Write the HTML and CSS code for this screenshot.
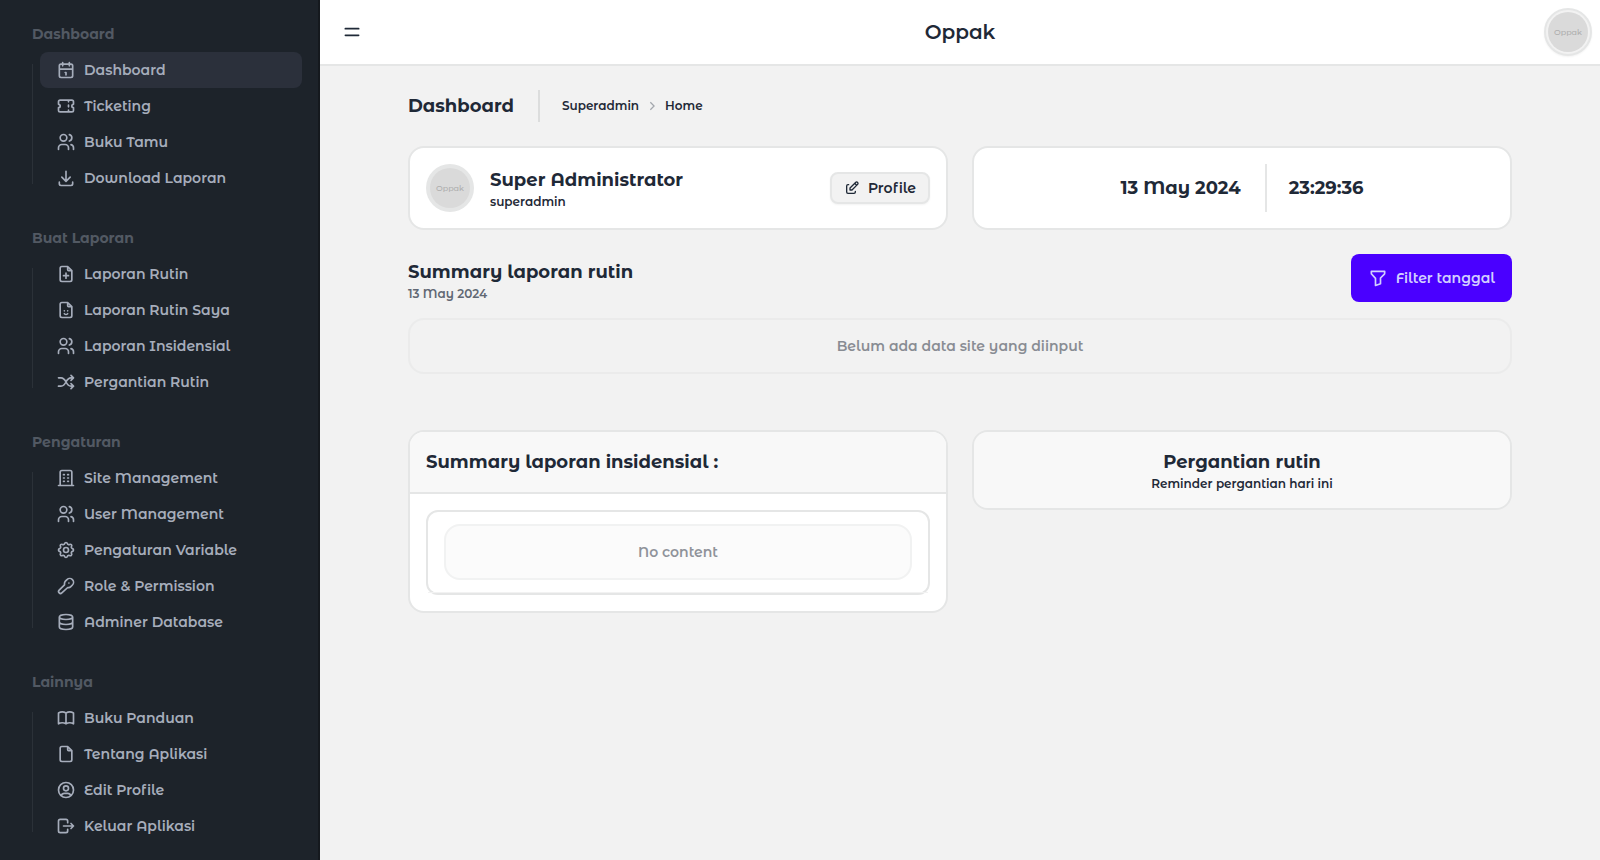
FILE: index.html
```html
<!DOCTYPE html>
<html lang="id">
<head>
<meta charset="utf-8">
<meta name="viewport" content="width=device-width, initial-scale=1">
<title>Oppak - Dashboard</title>
<link rel="stylesheet" href="styles.css">
</head>
<body>
<svg class="sprite" aria-hidden="true">
  <symbol id="i-calendar" viewBox="0 0 24 24"><path d="M4 7a2 2 0 0 1 2-2h12a2 2 0 0 1 2 2v12a2 2 0 0 1-2 2H6a2 2 0 0 1-2-2zM16 3v4M8 3v4M4 11h16M11 15h1M12 15v3"/></symbol>
  <symbol id="i-ticket" viewBox="0 0 24 24"><path d="M15 5v2M15 11v2M15 17v2M5 5h14a2 2 0 0 1 2 2v3a2 2 0 0 0 0 4v3a2 2 0 0 1-2 2H5a2 2 0 0 1-2-2v-3a2 2 0 0 0 0-4V7a2 2 0 0 1 2-2"/></symbol>
  <symbol id="i-users" viewBox="0 0 24 24"><path d="M5 7a4 4 0 1 0 8 0a4 4 0 1 0-8 0M3 21v-2a4 4 0 0 1 4-4h4a4 4 0 0 1 4 4v2M16 3.130a4 4 0 0 1 0 7.750M21 21v-2a4 4 0 0 0-3-3.850"/></symbol>
  <symbol id="i-download" viewBox="0 0 24 24"><path d="M4 17v2a2 2 0 0 0 2 2h12a2 2 0 0 0 2-2v-2M7 11l5 5l5-5M12 4v12"/></symbol>
  <symbol id="i-file" viewBox="0 0 24 24"><path d="M14 3v4a1 1 0 0 0 1 1h4M17 21H7a2 2 0 0 1-2-2V5a2 2 0 0 1 2-2h7l5 5v11a2 2 0 0 1-2 2z"/></symbol>
  <symbol id="i-file-plus" viewBox="0 0 24 24"><path d="M14 3v4a1 1 0 0 0 1 1h4M17 21H7a2 2 0 0 1-2-2V5a2 2 0 0 1 2-2h7l5 5v11a2 2 0 0 1-2 2zM12 11v6M9 14h6"/></symbol>
  <symbol id="i-file-smile" viewBox="0 0 24 24"><path d="M14 3v4a1 1 0 0 0 1 1h4M17 21H7a2 2 0 0 1-2-2V5a2 2 0 0 1 2-2h7l5 5v11a2 2 0 0 1-2 2zM10 13v.01M14 13v.01M10 16.500a3 3 0 0 0 4 0"/></symbol>
  <symbol id="i-shuffle" viewBox="0 0 24 24"><path d="M18 4l3 3l-3 3M18 20l3-3l-3-3M3 7h3c3 0 4.500 2 6 5s3 5 6 5h3M21 7h-3c-3 0-4.500 2-6 5s-3 5-6 5H3"/></symbol>
  <symbol id="i-building" viewBox="0 0 24 24"><path d="M3 21h18M9 8h1M9 12h1M9 16h1M14 8h1M14 12h1M14 16h1M5 21V5a2 2 0 0 1 2-2h10a2 2 0 0 1 2 2v16"/></symbol>
  <symbol id="i-settings" viewBox="0 0 24 24"><path d="M10.325 4.317c.426-1.756 2.924-1.756 3.350 0a1.724 1.724 0 0 0 2.573 1.066c1.543-.94 3.310.826 2.370 2.370a1.724 1.724 0 0 0 1.065 2.572c1.756.426 1.756 2.924 0 3.350a1.724 1.724 0 0 0-1.066 2.573c.94 1.543-.826 3.310-2.370 2.370a1.724 1.724 0 0 0-2.572 1.065c-.426 1.756-2.924 1.756-3.350 0a1.724 1.724 0 0 0-2.573-1.066c-1.543.94-3.310-.826-2.370-2.370a1.724 1.724 0 0 0-1.065-2.572c-1.756-.426-1.756-2.924 0-3.350a1.724 1.724 0 0 0 1.066-2.573c-.94-1.543.826-3.310 2.370-2.370c1 .608 2.296.07 2.572-1.065zM9 12a3 3 0 1 0 6 0a3 3 0 0 0-6 0"/></symbol>
  <symbol id="i-key" viewBox="0 0 24 24"><path d="M10.200 8.600a4 4 0 0 1 1.100-2.400l1.900-1.900a4.200 4.200 0 0 1 6.500 6.500l-1.900 1.900a4 4 0 0 1-3.700 1.100L7 20.200a2.200 2.200 0 0 1-3.200-3.200L10.200 10.600zM15.500 8.500v.01"/></symbol>
  <symbol id="i-database" viewBox="0 0 24 24"><path d="M4 6a8 3 0 1 0 16 0a8 3 0 1 0-16 0M4 6v6a8 3 0 0 0 16 0V6M4 12v6a8 3 0 0 0 16 0v-6"/></symbol>
  <symbol id="i-book" viewBox="0 0 24 24"><path d="M3 19a9 9 0 0 1 9 0a9 9 0 0 1 9 0M3 6a9 9 0 0 1 9 0a9 9 0 0 1 9 0M3 6v13M12 6v13M21 6v13"/></symbol>
  <symbol id="i-user-circle" viewBox="0 0 24 24"><path d="M3 12a9 9 0 1 0 18 0a9 9 0 1 0-18 0M9 10a3 3 0 1 0 6 0a3 3 0 1 0-6 0M6.168 18.849A4 4 0 0 1 10 16h4a4 4 0 0 1 3.834 2.855"/></symbol>
  <symbol id="i-logout" viewBox="0 0 24 24"><path d="M14 8V6a2 2 0 0 0-2-2H5a2 2 0 0 0-2 2v12a2 2 0 0 0 2 2h7a2 2 0 0 0 2-2v-2M9 12h12l-3-3M18 15l3-3"/></symbol>
  <symbol id="i-menu" viewBox="0 0 24 24"><path d="M4 8h16M4 16h16"/></symbol>
  <symbol id="i-edit" viewBox="0 0 24 24"><path d="M7 7H6a2 2 0 0 0-2 2v9a2 2 0 0 0 2 2h9a2 2 0 0 0 2-2v-1M20.385 6.585a2.100 2.100 0 0 0-2.970-2.970L9 12v3h3zM16 5l3 3"/></symbol>
  <symbol id="i-filter" viewBox="0 0 24 24"><path d="M4 4h16v2.172a2 2 0 0 1-.586 1.414L15 12v7l-6 2v-8.500L4.520 7.572A2 2 0 0 1 4 6.227z"/></symbol>
  <symbol id="i-chevron" viewBox="0 0 24 24"><path d="M8 3l9 9l-9 9"/></symbol>
</svg>

<div class="layout">
  <aside class="sidebar">
    <nav class="menu" aria-label="Menu utama">
      <section class="menu-group">
        <h2 class="menu-title">Dashboard</h2>
        <ul class="menu-list">
          <li><a class="menu-link active" href="#" aria-current="page"><svg class="icon"><use href="#i-calendar"/></svg>Dashboard</a></li>
          <li><a class="menu-link" href="#"><svg class="icon"><use href="#i-ticket"/></svg>Ticketing</a></li>
          <li><a class="menu-link" href="#"><svg class="icon"><use href="#i-users"/></svg>Buku Tamu</a></li>
          <li><a class="menu-link" href="#"><svg class="icon"><use href="#i-download"/></svg>Download Laporan</a></li>
        </ul>
      </section>
      <section class="menu-group">
        <h2 class="menu-title">Buat Laporan</h2>
        <ul class="menu-list">
          <li><a class="menu-link" href="#"><svg class="icon"><use href="#i-file-plus"/></svg>Laporan Rutin</a></li>
          <li><a class="menu-link" href="#"><svg class="icon"><use href="#i-file-smile"/></svg>Laporan Rutin Saya</a></li>
          <li><a class="menu-link" href="#"><svg class="icon"><use href="#i-users"/></svg>Laporan Insidensial</a></li>
          <li><a class="menu-link" href="#"><svg class="icon"><use href="#i-shuffle"/></svg>Pergantian Rutin</a></li>
        </ul>
      </section>
      <section class="menu-group">
        <h2 class="menu-title">Pengaturan</h2>
        <ul class="menu-list">
          <li><a class="menu-link" href="#"><svg class="icon"><use href="#i-building"/></svg>Site Management</a></li>
          <li><a class="menu-link" href="#"><svg class="icon"><use href="#i-users"/></svg>User Management</a></li>
          <li><a class="menu-link" href="#"><svg class="icon"><use href="#i-settings"/></svg>Pengaturan Variable</a></li>
          <li><a class="menu-link" href="#"><svg class="icon"><use href="#i-key"/></svg>Role &amp; Permission</a></li>
          <li><a class="menu-link" href="#"><svg class="icon"><use href="#i-database"/></svg>Adminer Database</a></li>
        </ul>
      </section>
      <section class="menu-group">
        <h2 class="menu-title">Lainnya</h2>
        <ul class="menu-list">
          <li><a class="menu-link" href="#"><svg class="icon"><use href="#i-book"/></svg>Buku Panduan</a></li>
          <li><a class="menu-link" href="#"><svg class="icon"><use href="#i-file"/></svg>Tentang Aplikasi</a></li>
          <li><a class="menu-link" href="#"><svg class="icon"><use href="#i-user-circle"/></svg>Edit Profile</a></li>
          <li><a class="menu-link" href="#"><svg class="icon"><use href="#i-logout"/></svg>Keluar Aplikasi</a></li>
        </ul>
      </section>
    </nav>
  </aside>

  <div class="page">
    <header class="navbar">
      <button class="menu-toggle" type="button" aria-label="Buka menu"><svg class="icon"><use href="#i-menu"/></svg></button>
      <span class="brand">Oppak</span>
      <button class="avatar avatar-button" type="button"><span class="avatar-face">Oppak</span></button>
    </header>

    <main class="content">
      <div class="page-head">
        <h1 class="heading">Dashboard</h1>
        <nav class="breadcrumbs" aria-label="Breadcrumb">
          <a href="#">Superadmin</a>
          <svg class="crumb-arrow"><use href="#i-chevron"/></svg>
          <a href="#">Home</a>
        </nav>
      </div>

      <div class="grid">
        <section class="card card-row">
          <span class="avatar"><span class="avatar-face">Oppak</span></span>
          <div class="grow">
            <h2 class="heading">Super Administrator</h2>
            <p class="sub">superadmin</p>
          </div>
          <button class="btn-profile" type="button"><svg class="icon icon-small"><use href="#i-edit"/></svg>Profile</button>
        </section>
        <section class="card clock">
          <span class="heading clock-date">13 May 2024</span>
          <time class="heading clock-time">23:29:36</time>
        </section>
      </div>

      <section class="summary">
        <div class="summary-head">
          <div>
            <h2 class="heading">Summary laporan rutin</h2>
            <p class="sub muted">13 May 2024</p>
          </div>
          <button class="btn-primary" type="button"><svg class="icon"><use href="#i-filter"/></svg>Filter tanggal</button>
        </div>
        <div class="empty">Belum ada data site yang diinput</div>
      </section>

      <div class="grid">
        <section class="panel">
          <header class="panel-head panel-head-line"><h2 class="heading">Summary laporan insidensial :</h2></header>
          <div class="panel-body">
            <div class="table-box">
              <div class="table-row"><div class="empty">No content</div></div>
            </div>
          </div>
        </section>
        <section class="panel">
          <header class="panel-head centered">
            <h2 class="heading">Pergantian rutin</h2>
            <p class="sub">Reminder pergantian hari ini</p>
          </header>
        </section>
      </div>
    </main>
  </div>
</div>
</body>
</html>
```
FILE: styles.css
```css
* {
  box-sizing: border-box;
}

body {
  margin: 0;
  background: #f2f2f2;
  color: #1f2937;
  font-family: "Montserrat Alternates", Inter, sans-serif;
  font-size: 14px;
  font-weight: 600;
  line-height: 20px;
}

h1, h2, p, ul {
  margin: 0;
  padding: 0;
}

button {
  font: inherit;
  color: inherit;
  cursor: pointer;
}

a {
  color: inherit;
  text-decoration: none;
}

.sprite {
  display: none;
}

.icon {
  width: 20px;
  height: 20px;
  flex: none;
  fill: none;
  stroke: currentColor;
  stroke-width: 2;
  stroke-linecap: round;
  stroke-linejoin: round;
}

.icon-small {
  width: 16px;
  height: 16px;
}

.layout {
  display: flex;
  min-height: 100vh;
}

/* Sidebar */
.sidebar {
  width: 320px;
  flex: none;
  padding: 16px;
  background: #1d232a;
  border-right: 2px solid #15191e;
  color: #a6adbb;
}

.menu {
  display: flex;
  flex-direction: column;
  gap: 24px;
}

.menu-title {
  padding: 8px 16px;
  color: #525963;
  font-size: 14px;
  font-weight: 700;
}

.menu-list {
  position: relative;
  margin-left: 16px;
  padding-left: 8px;
  list-style: none;
}

.menu-list::before {
  content: "";
  position: absolute;
  top: 12px;
  bottom: 12px;
  left: 0;
  width: 1px;
  background: #2b3138;
}

.menu-link {
  display: flex;
  align-items: center;
  gap: 8px;
  padding: 8px 16px;
  border-radius: 8px;
}

.menu-link.active {
  background: #2b303b;
}

/* Navbar */
.page {
  flex: 1;
  min-width: 0;
}

.navbar {
  display: grid;
  grid-template-columns: 1fr auto 1fr;
  align-items: center;
  padding: 8px;
  background: #fff;
  border-bottom: 2px solid #e5e6e6;
}

.menu-toggle {
  display: flex;
  justify-self: start;
  padding: 14px;
  border: 0;
  border-radius: 8px;
  background: none;
}

.brand {
  font-size: 20px;
  line-height: 28px;
}

.avatar {
  display: flex;
  flex: none;
  width: 48px;
  height: 48px;
  padding: 4px;
  border: 0;
  border-radius: 50%;
  background: #e5e6e6;
}

.avatar-face {
  display: flex;
  flex: 1;
  align-items: center;
  justify-content: center;
  border-radius: 50%;
  background: #dadada;
  color: #aeaeae;
  font-size: 8px;
  font-weight: 500;
  line-height: 12px;
}

.avatar-button {
  justify-self: end;
  padding: 2px;
  border: 2px solid #e5e6e6;
  background: #f2f2f2;
  box-shadow: 0 1px 2px rgba(0, 0, 0, 0.05);
}

/* Content */
.content {
  max-width: 1152px;
  margin: 0 auto;
  padding: 24px;
}

.heading {
  font-size: 18px;
  font-weight: 700;
  line-height: 28px;
}

.sub {
  font-size: 12px;
  line-height: 16px;
}

.muted {
  color: #616874;
}

.page-head {
  display: flex;
  align-items: center;
  gap: 24px;
  margin-bottom: 24px;
}

.breadcrumbs {
  display: flex;
  align-items: center;
  gap: 8px;
  height: 32px;
  padding-left: 22px;
  border-left: 2px solid #dcdddd;
  font-size: 12px;
}

.crumb-arrow {
  width: 10px;
  height: 10px;
  fill: none;
  stroke: #a3a7ad;
  stroke-width: 3;
}

.grid {
  display: grid;
  grid-template-columns: 1fr 1fr;
  align-items: start;
  gap: 24px;
}

.card {
  display: flex;
  align-items: center;
  padding: 16px;
  background: #fff;
  border: 2px solid #e5e6e6;
  border-radius: 16px;
}

.card-row {
  gap: 16px;
}

.grow {
  flex: 1;
}

.btn-profile {
  display: flex;
  align-items: center;
  gap: 8px;
  height: 32px;
  padding: 0 12px;
  border: 2px solid #e5e6e6;
  border-radius: 8px;
  background: #f2f2f2;
  box-shadow: 0 1px 2px rgba(0, 0, 0, 0.05);
}

.clock {
  justify-content: center;
}

.clock-date {
  padding-right: 24px;
}

.clock-time {
  padding: 10px 0 10px 22px;
  border-left: 2px solid #e5e6e6;
}

.summary {
  margin: 24px 0 56px;
}

.summary-head {
  display: flex;
  align-items: flex-end;
  justify-content: space-between;
  margin-bottom: 16px;
}

.btn-primary {
  display: flex;
  align-items: center;
  gap: 8px;
  height: 48px;
  padding: 0 17px;
  border: 0;
  border-radius: 8px;
  background: #4a00ff;
  color: #d2cfff;
}

.empty {
  padding: 16px;
  border: 2px solid #e5e6e6;
  border-radius: 16px;
  background: #f8f8f8;
  opacity: 0.5;
  text-align: center;
}

.summary .empty {
  background: #f2f2f2;
}

.panel {
  overflow: hidden;
  border: 2px solid #e5e6e6;
  border-radius: 16px;
  background: #fff;
}

.panel-head {
  padding: 16px;
  background: #f8f8f8;
}

.panel-head-line {
  border-bottom: 2px solid #e5e6e6;
}

.centered {
  text-align: center;
}

.panel-body {
  padding: 16px;
}

.table-box {
  border: 2px solid #e5e6e6;
  border-radius: 12px;
}

.table-row {
  padding: 12px 16px;
  border-bottom: 1px solid #f2f2f2;
}
```
